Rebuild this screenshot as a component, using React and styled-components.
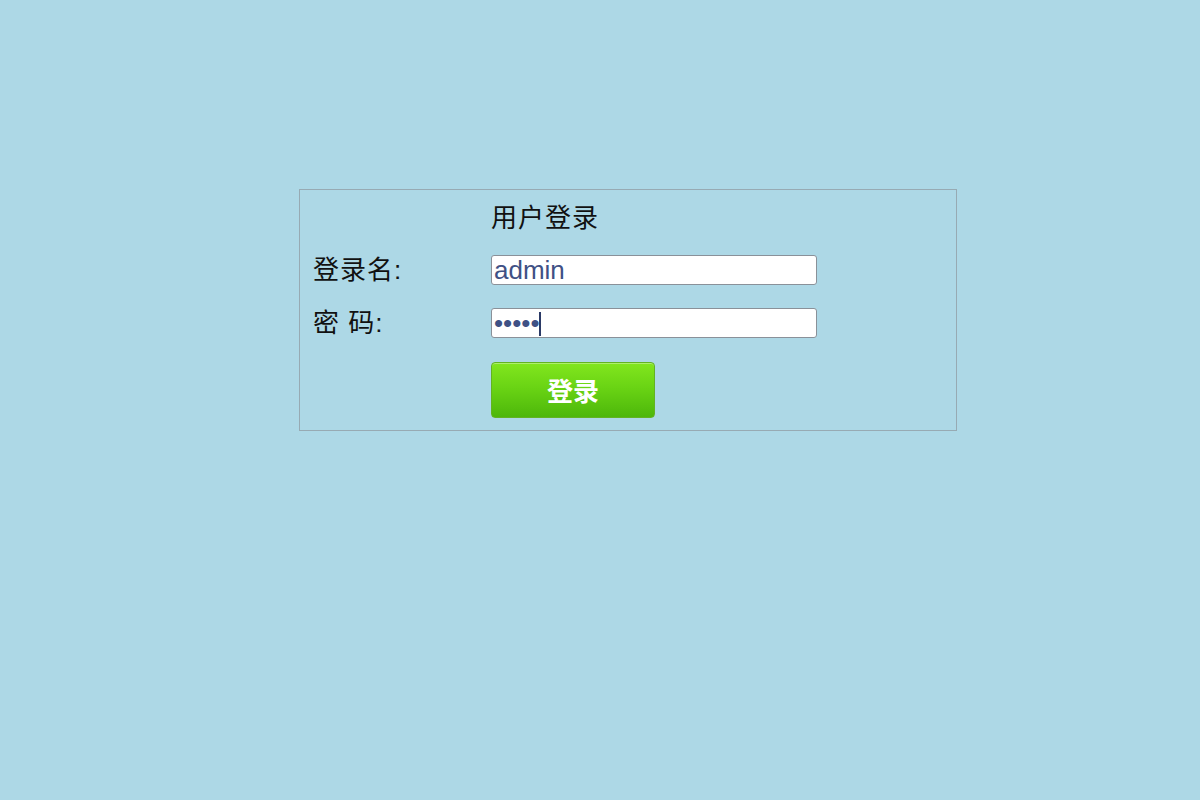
import React from 'react'
import styled, { createGlobalStyle } from 'styled-components'

const GlobalStyle = createGlobalStyle`
  html, body {
    margin: 0;
    padding: 0;
    background: #add8e6;
  }
  body {
    font-family: "Liberation Sans", Arial, "Noto Sans CJK SC", sans-serif;
  }
`

const Page = styled.div`
  width: 1200px;
  height: 800px;
  padding-top: 189px;
  box-sizing: border-box;
`

const Box = styled.div`
  width: 658px;
  margin-left: 299px;
  box-sizing: border-box;
  border: 1px solid #97aab3;
  padding: 4px 13px 12px;
  display: flex;
  flex-direction: column;
  color: #111;
  font-family: "Liberation Sans", "Noto Sans CJK SC", sans-serif;
  font-size: 26px;
`

const Row = styled.div`
  display: flex;
  align-items: center;
  height: ${p => p.$h}px;
  margin-top: ${p => p.$gap || 0}px;
`

const Label = styled.label`
  width: 178px;
  flex-shrink: 0;
  letter-spacing: 1px;
  line-height: 1;
`

const Title = styled(Label)`
  width: auto;
`

const Field = styled.div`
  position: relative;
`

const Input = styled.input`
  display: block;
  width: 326px;
  height: 30px;
  box-sizing: border-box;
  border: 1px solid #8a9199;
  border-radius: 3px;
  background: #fff;
  padding: 0 2px;
  font-family: "Liberation Sans", Arial, sans-serif;
  font-size: 26px;
  color: #3f5185;
  outline: none;
`

const Caret = styled.span`
  position: absolute;
  left: 48px;
  top: 4px;
  width: 1.5px;
  height: 24px;
  background: #2b3a66;
`

const LoginButton = styled.button`
  width: 164px;
  height: 56px;
  border: 1px solid #63b322;
  border-radius: 4px;
  background: linear-gradient(to bottom, #82e61e 0%, #6ad414 45%, #4db70b 100%);
  box-shadow: inset 0 1px 0 rgba(255, 255, 255, 0.35);
  color: #fff;
  font-family: "Noto Sans CJK SC", sans-serif;
  font-weight: bold;
  font-size: 26px;
  line-height: 1;
  padding: 0;
  cursor: pointer;
`

const App = () => {
  return (
    <Page>
      <GlobalStyle />
      <Box>
        <Row $h={48}>
          <Label />
          <Title>用户登录</Title>
        </Row>
        <Row $h={30} $gap={13}>
          <Label>登录名:</Label>
          <Field>
            <Input type="text" defaultValue="admin" readOnly />
          </Field>
        </Row>
        <Row $h={30} $gap={23}>
          <Label>密 码:</Label>
          <Field>
            <Input type="password" defaultValue="admin" readOnly />
            <Caret />
          </Field>
        </Row>
        <Row $h={56} $gap={24}>
          <Label />
          <LoginButton>登录</LoginButton>
        </Row>
      </Box>
    </Page>
  )
}

export default App
